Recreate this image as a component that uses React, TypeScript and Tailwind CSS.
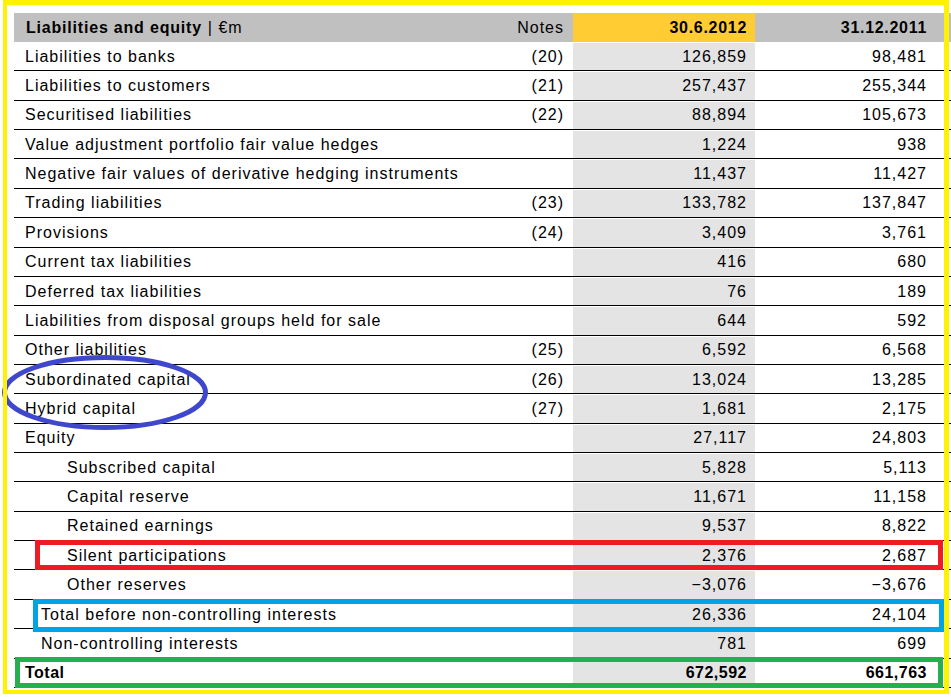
import React from "react";

type Row = { label: string; note?: string; v1: string; v2: string; indent?: 0 | 1 | 2; bold?: boolean };

const rows: Row[] = [
  { label: "Liabilities to banks", note: "(20)", v1: "126,859", v2: "98,481" },
  { label: "Liabilities to customers", note: "(21)", v1: "257,437", v2: "255,344" },
  { label: "Securitised liabilities", note: "(22)", v1: "88,894", v2: "105,673" },
  { label: "Value adjustment portfolio fair value hedges", v1: "1,224", v2: "938" },
  { label: "Negative fair values of derivative hedging instruments", v1: "11,437", v2: "11,427" },
  { label: "Trading liabilities", note: "(23)", v1: "133,782", v2: "137,847" },
  { label: "Provisions", note: "(24)", v1: "3,409", v2: "3,761" },
  { label: "Current tax liabilities", v1: "416", v2: "680" },
  { label: "Deferred tax liabilities", v1: "76", v2: "189" },
  { label: "Liabilities from disposal groups held for sale", v1: "644", v2: "592" },
  { label: "Other liabilities", note: "(25)", v1: "6,592", v2: "6,568" },
  { label: "Subordinated capital", note: "(26)", v1: "13,024", v2: "13,285" },
  { label: "Hybrid capital", note: "(27)", v1: "1,681", v2: "2,175" },
  { label: "Equity", v1: "27,117", v2: "24,803" },
  { label: "Subscribed capital", v1: "5,828", v2: "5,113", indent: 2 },
  { label: "Capital reserve", v1: "11,671", v2: "11,158", indent: 2 },
  { label: "Retained earnings", v1: "9,537", v2: "8,822", indent: 2 },
  { label: "Silent participations", v1: "2,376", v2: "2,687", indent: 2 },
  { label: "Other reserves", v1: "\u22123,076", v2: "\u22123,676", indent: 2 },
  { label: "Total before non-controlling interests", v1: "26,336", v2: "24,104", indent: 1 },
  { label: "Non-controlling interests", v1: "781", v2: "699", indent: 1 },
  { label: "Total", v1: "672,592", v2: "661,763", bold: true },
];

const indentClass = ["pl-[11px]", "pl-[27px]", "pl-[53px]"];

export default function App() {
  return (
    <div className="relative w-[951px] h-[697px] overflow-hidden bg-white font-['Liberation_Sans',Arial,sans-serif] text-black">
      <div className="ml-[14px] mt-[13px] w-[940px] flex flex-col">
        {/* header */}
        <div className="flex h-[29px] bg-[#c0c0c0] text-[16px] items-stretch">
          <div className="w-[500px] pl-[12px] flex items-center tracking-[0.8px]">
            <span className="font-bold">Liabilities and equity</span>
            <span className="ml-[6px] tracking-[1px]">| €m</span>
          </div>
          <div className="w-[59px] pr-[9px] flex items-center justify-end tracking-[1px]">Notes</div>
          <div className="w-[182px] pr-[8px] flex items-center justify-end bg-[#ffcc33] font-bold tracking-[0.7px]">30.6.2012</div>
          <div className="w-[199px] pr-[27px] flex items-center justify-end font-bold tracking-[0.7px]">31.12.2011</div>
        </div>
        {rows.map((r, i) => (
          <div key={i} className="flex h-[29.36px] pt-[1px] border-b border-black text-[16px] tracking-[1px]">
            <div className={`w-[500px] flex items-center whitespace-nowrap ${indentClass[r.indent ?? 0]} ${r.bold ? "font-bold tracking-[0.5px]" : ""}`}>
              {r.label}
            </div>
            <div className="w-[59px] pr-[9px] flex items-center justify-end">{r.note ?? ""}</div>
            <div className={`w-[182px] pr-[8px] flex items-center justify-end bg-[#e4e4e4] ${r.bold ? "font-bold tracking-[0.5px]" : ""}`}>
              {r.v1}
            </div>
            <div className={`w-[199px] pr-[27px] flex items-center justify-end ${r.bold ? "font-bold tracking-[0.5px]" : ""}`}>
              {r.v2}
            </div>
          </div>
        ))}
      </div>

      {/* annotations */}
      <svg className="absolute left-0 top-[350px]" width="215" height="90" viewBox="0 0 215 90">
        <ellipse cx="105" cy="42.5" rx="100.5" ry="35" fill="none" stroke="#3f48cc" strokeWidth="5" />
      </svg>
      <div className="absolute left-[35px] top-[540px] w-[908px] h-[30px] border-[5px] border-[#ed1c24]" />
      <div className="absolute left-[33px] top-[599px] w-[911px] h-[33px] border-[5px] border-[#00a2e8]" />
      <div className="absolute left-[15px] top-[657px] w-[928px] h-[31px] border-[5px] border-[#22b14c]" />
      <div className="absolute left-[3px] top-0 w-[946px] h-[694px] border-t-[5px] border-r-[5px] border-b-[4px] border-l-[4px] border-[#fff200]" />
    </div>
  );
}
